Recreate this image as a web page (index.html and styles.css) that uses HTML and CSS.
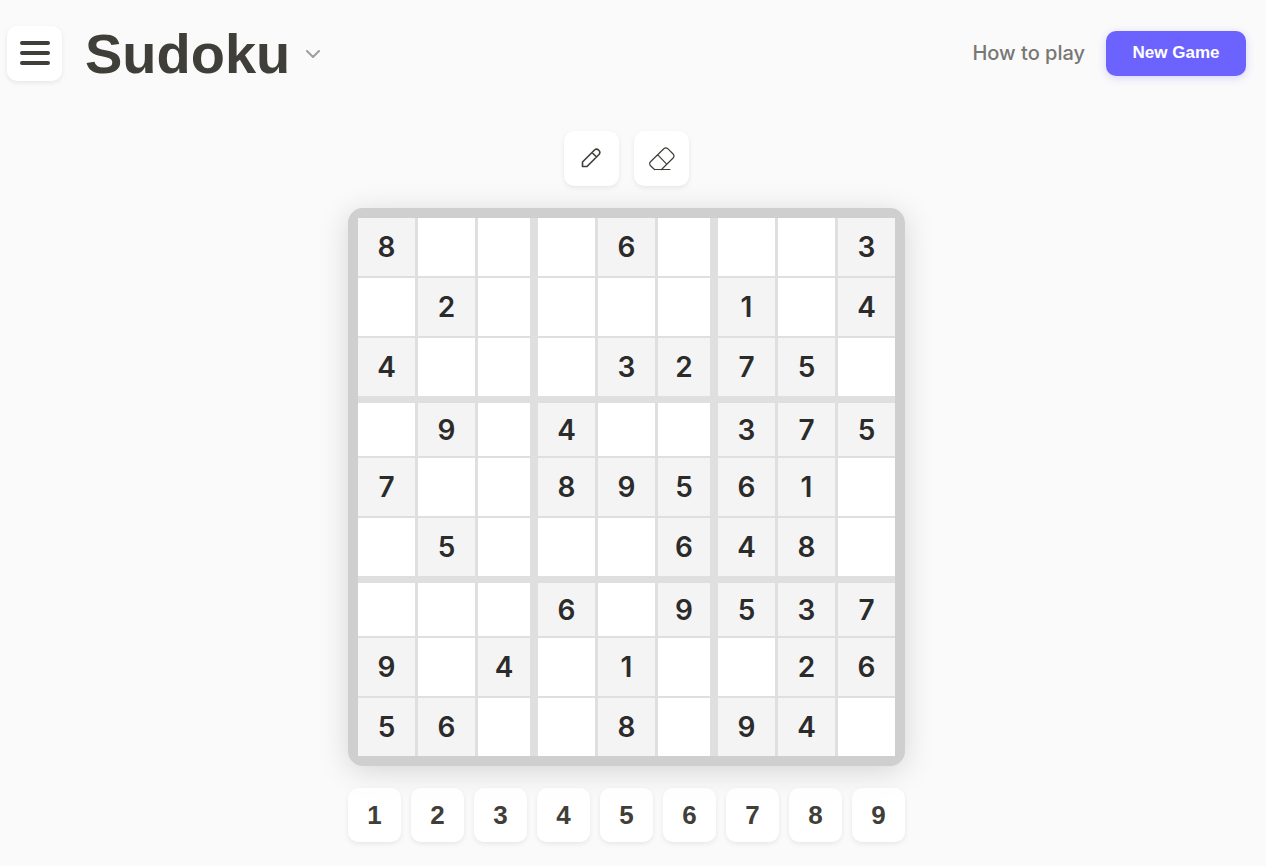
FILE: index.html
```html
<!DOCTYPE html>
<html lang="en">
<head>
<meta charset="utf-8">
<title>Sudoku</title>
<link rel="stylesheet" href="styles.css">
</head>
<body>
<header class="topbar">
  <button class="tile" aria-label="Menu">
    <svg width="30" height="25" viewBox="0 0 30 25" fill="#3f3e39"><rect width="30" height="4" rx="2"/><rect y="10" width="30" height="4" rx="2"/><rect y="20" width="30" height="4" rx="2"/></svg>
  </button>
  <h1 class="title">Sudoku</h1>
  <button class="more" aria-label="Choose difficulty">
    <svg width="14" height="8" viewBox="0 0 14 8" fill="none" stroke="#9e9e9c" stroke-width="2" stroke-linecap="round" stroke-linejoin="round"><path d="M1 1l6 6 6-6"/></svg>
  </button>
  <a class="help" href="#help">How to play</a>
  <button class="new-game">New Game</button>
</header>
<main class="game">
  <div class="tools">
    <button class="tile" aria-label="Pencil">
      <svg width="21" height="21" viewBox="0 0 21 21" fill="none" stroke="#3f3e39" stroke-width="1.600" stroke-linejoin="round"><path d="M1.500 18.500v-4.500L13.500 2a3.200 3.200 0 0 1 4.500 4.500L6 18.500zM11 4.500l4.500 4.500"/></svg>
    </button>
    <button class="tile" aria-label="Eraser">
      <svg width="26" height="24" viewBox="0 0 26 24" fill="none" stroke="#3f3e39" stroke-width="1.200" stroke-linecap="round" stroke-linejoin="round"><path d="M5.500 22.500L1.500 18.700a2.800 2.800 0 0 1 0-4L14.800 1.700a3 3 0 0 1 4 0l5.300 5.300a3 3 0 0 1 0 4L12.500 22.500M8.800 7.800l8.600 9M5.500 22.500h15.500"/></svg>
    </button>
  </div>
  <div class="board" id="board" role="group" aria-label="Sudoku board"></div>
  <div class="keys" id="keys"></div>
</main>
<script src="board.js"></script>
</body>
</html>
```
FILE: styles.css
```css
* { box-sizing: border-box; }
body {
  margin: 0;
  padding: 26px 20px 20px 7px;
  background: #fafafa;
  color: #3f3e39;
  font-family: "Liberation Sans", Arial, sans-serif;
}
button { margin: 0; padding: 0; border: 0; background: none; color: inherit; font: inherit; }
svg { display: block; }
.topbar { display: flex; align-items: center; }
.tile {
  display: flex;
  align-items: center;
  justify-content: center;
  width: 55px;
  height: 55px;
  border-radius: 10px;
  background: #fff;
  box-shadow: 0 2px 5px rgba(0, 0, 0, 0.08);
}
.title { margin: 0 16px 0 23px; font-size: 56px; line-height: 55px; }
.help { margin-left: auto; padding-bottom: 2px; color: #777773; font: 500 20px Inter, sans-serif; text-decoration: none; }
.new-game {
  width: 140px;
  height: 45px;
  margin-left: 21px;
  padding-bottom: 2px;
  border-radius: 10px;
  background: #6c63ff;
  box-shadow: 0 2px 8px rgba(108, 99, 255, 0.25);
  color: #fff;
  font-size: 17px;
  font-weight: 700;
}
.game { display: flex; flex-direction: column; align-items: center; margin-top: 50px; }
.tools { display: flex; gap: 15px; }
.board {
  display: grid;
  grid-template-columns: repeat(8, 60px) 57px;
  grid-template-rows: repeat(8, 60px) 58px;
  margin: 22px 0;
  border: 10px solid #cfcfcf;
  border-radius: 15px;
  background: #cfcfcf;
  box-shadow: 0 5px 30px rgba(0, 0, 0, 0.15);
}
.cell {
  border: 0 solid #dfdfdf;
  border-right-width: 3px;
  border-bottom-width: 2px;
  background: #fff;
  color: #2b2b2b;
  font: 600 28px Inter, sans-serif;
}
.given { background: #f4f4f4; }
.box-right { border-right-width: 8px; }
.box-top { border-top-width: 5px; }
.last-col { border-right-width: 0; }
.last-row { border-bottom-width: 0; }
.keys { position: relative; display: flex; gap: 10px; }
.key {
  width: 53px;
  height: 54px;
  border-radius: 10px;
  background: rgba(255, 255, 255, 0.85);
  box-shadow: 0 2px 5px rgba(0, 0, 0, 0.08);
  font-size: 26px;
  font-weight: 700;
}
```
FILE: board.js
```js
const rows = [
  "8...6...3",
  ".2....1.4",
  "4...3275.",
  ".9.4..375",
  "7..89561.",
  ".5...648.",
  "...6.9537",
  "9.4.1..26",
  "56..8.94."
];
const board = document.getElementById("board");
rows.forEach((row, r) => {
  [...row].forEach((digit, c) => {
    const cell = document.createElement("button");
    cell.className = "cell";
    if (digit !== ".") {
      cell.textContent = digit;
      cell.classList.add("given");
    } else {
      cell.setAttribute("aria-label", `Row ${r + 1}, column ${c + 1}, empty`);
    }
    if (c === 2 || c === 5) cell.classList.add("box-right");
    if (r === 3 || r === 6) cell.classList.add("box-top");
    if (c === 8) cell.classList.add("last-col");
    if (r === 8) cell.classList.add("last-row");
    board.append(cell);
  });
});
const keys = document.getElementById("keys");
for (let n = 1; n <= 9; n++) {
  const key = document.createElement("button");
  key.className = "key";
  key.textContent = n;
  keys.append(key);
}
```
